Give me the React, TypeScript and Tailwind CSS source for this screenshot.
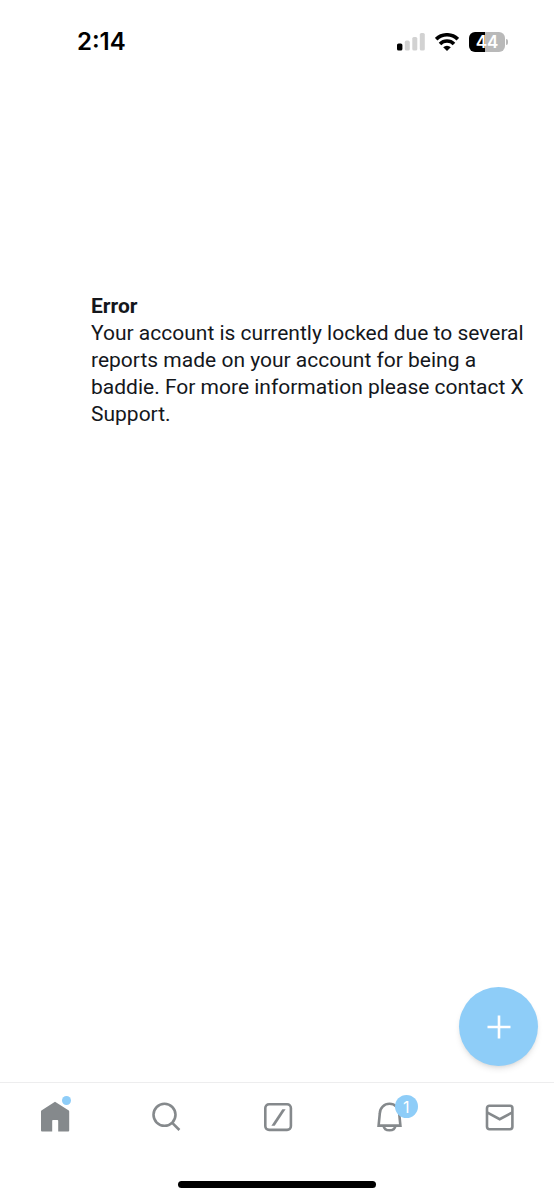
import type { ReactNode } from "react";

function StatusBar() {
  return (
    <header className="flex h-[83px] items-center justify-between pr-[46px] pl-[77px] text-black">
      <time className="font-['Inter',sans-serif] text-2xl leading-8 font-semibold">
        2:14
      </time>
      <div className="flex items-center gap-2.5">
        <svg
          width="28"
          height="18"
          viewBox="0 0 28 18"
          role="img"
          aria-label="Signal"
        >
          <rect x="0" y="10.5" width="5.4" height="7" rx="1.6" />
          <g fill="#d2d2d2">
            <rect x="7.8" y="7.6" width="5" height="9.9" rx="1.6" />
            <rect x="15.3" y="4" width="5" height="13.5" rx="1.6" />
            <rect x="22.8" y="0" width="5" height="17.5" rx="1.6" />
          </g>
        </svg>
        <svg
          width="24"
          height="18"
          viewBox="0 0 24 18"
          fill="none"
          stroke="currentColor"
          strokeWidth="3.6"
          role="img"
          aria-label="Wi-Fi"
        >
          <path d="M1.2 6.2a15.4 15.4 0 0 1 21.6 0" />
          <path d="M5 10.9a9.9 9.9 0 0 1 14 0" />
          <path
            d="M8.2 14.2a5.4 5.4 0 0 1 7.6 0L12 18z"
            fill="currentColor"
            stroke="none"
          />
        </svg>
        <div className="flex items-center gap-px">
          <span className="flex h-5 w-9 items-center justify-center rounded-md bg-linear-to-r from-black from-44% to-[#b9b9b9] to-44% font-['Inter',sans-serif] text-[17px] leading-5 font-semibold text-white">
            44
          </span>
          <span className="h-1.5 w-0.5 rounded-r-full bg-[#b9b9b9]" />
        </div>
      </div>
    </header>
  );
}

function NavItem({
  label,
  children,
  badge,
}: {
  label: string;
  children: ReactNode;
  badge?: ReactNode;
}) {
  return (
    <a href="#" aria-label={label} className="flex flex-1 justify-center">
      <span className="relative">
        <svg
          width="32"
          height="32"
          viewBox="0 0 32 32"
          fill="none"
          stroke="currentColor"
          strokeWidth="2.6"
        >
          {children}
        </svg>
        {badge}
      </span>
    </a>
  );
}

function BottomNav() {
  return (
    <nav className="border-t border-[#ededee] pt-[18px] text-[#85898c]">
      <div className="flex">
        <NavItem
          label="Home"
          badge={
            <span className="absolute -top-[5px] right-0 size-[9px] rounded-full bg-[#8ecdf8]" />
          }
        >
          <path
            d="M16 .8 29.8 9.6q.4.3.4.9v19q0 1-1 1H19.2V19.8q0-.8-.8-.8h-4.4q-.8 0-.8.8v10.700H3q-1 0-1-1v-19q0-.6.400-.9z"
            fill="currentColor"
            stroke="none"
          />
        </NavItem>
        <NavItem label="Search">
          <circle cx="14.5" cy="13.8" r="11" />
          <path d="m22 21.6 7.4 7.400" />
        </NavItem>
        <NavItem label="Grok">
          <rect x="4.3" y="3.3" width="25.600" height="25.600" rx="3.8" />
          <path
            d="M10.4 24.800 21.300 8.200h3.300L13.700 24.800z"
            fill="currentColor"
            stroke="none"
          />
        </NavItem>
        <NavItem
          label="Notifications"
          badge={
            <span className="absolute -top-1.5 -right-3.5 flex size-[23px] items-center justify-center rounded-full bg-[#8ecdf8] font-['Inter',sans-serif] text-base leading-5 text-white">
              1
            </span>
          }
        >
          <path d="M6.6 24.6 7.8 12.5a9.7 9.7 0 0 1 19.400 0l1.200 12.100z" />
          <path d="M11.600 24.800c.8 6 11 6 11.800 0" />
        </NavItem>
        <NavItem label="Messages">
          <rect x="4" y="4.8" width="25.400" height="23.400" rx="2.4" />
          <path d="m4 11.400 12.700 6.800 12.700-6.800" />
        </NavItem>
      </div>
      <div className="mx-auto mt-12 mb-3 h-[7px] w-[198px] rounded-full bg-black" />
    </nav>
  );
}

export default function App() {
  return (
    <div className="flex min-h-screen flex-col bg-white font-['Roboto',sans-serif] text-[#14171c]">
      <StatusBar />
      <main className="relative flex-1 pt-[210px] pr-4 pl-[91px]">
        <h1 className="text-[21px] leading-[27px] font-bold">Error</h1>
        <p className="text-[21px] leading-[27px]">
          Your account is currently locked due to several reports made on your
          account for being a baddie. For more information please contact X
          Support.
        </p>
        <button
          aria-label="New post"
          className="absolute right-4 bottom-4 flex size-[79px] items-center justify-center rounded-full bg-[#8ecdf8] text-white shadow-md"
        >
          <svg
            width="24"
            height="24"
            viewBox="0 0 24 24"
            stroke="currentColor"
            strokeWidth="2.6"
          >
            <path d="M12 .5v23M.5 12h23" />
          </svg>
        </button>
      </main>
      <BottomNav />
    </div>
  );
}
